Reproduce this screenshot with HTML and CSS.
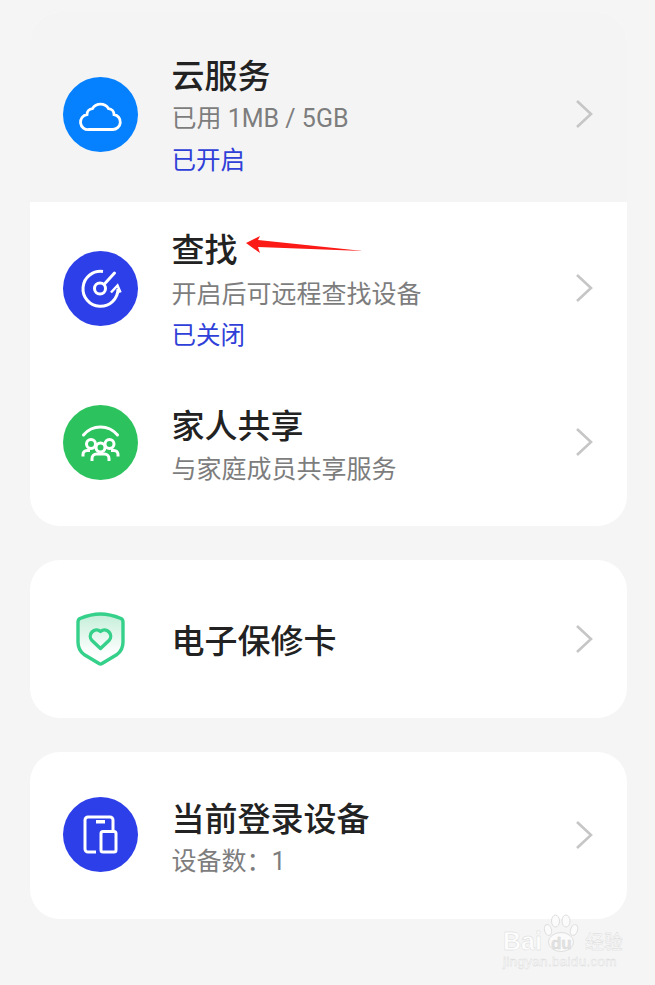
FILE: index.html
```html
<!DOCTYPE html>
<html lang="zh-CN">
<head>
<meta charset="utf-8">
<title>账号服务</title>
<link rel="stylesheet" href="styles.css">
</head>
<body>
<main class="page">
  <section class="card card-services">
    <div class="row row-pressed row-tall">
      <span class="icon icon-blue">
        <svg viewBox="0 0 75 75" width="75" height="75"><path d="M26 52.500H49.500a7.500 7.500 0 0 0 1.500-14.900a6 6 0 0 0-5.500-6a9.500 9.500 0 0 0-16 0a6 6 0 0 0-5.500 6a7.500 7.500 0 0 0 2 14.900z" fill="none" stroke="#fff" stroke-width="2.800"/></svg>
      </span>
      <div class="text">
        <div class="title">云服务</div>
        <div class="sub sub-latin">已用 1MB / 5GB</div>
        <div class="status">已开启</div>
      </div>
      <svg class="chev" viewBox="0 0 18 30" width="18" height="30"><path d="M2 2l14 13L2 28" fill="none" stroke="#c6c6c6" stroke-width="2.600"/></svg>
    </div>
    <div class="row row-tall">
      <span class="icon icon-indigo">
        <svg viewBox="0 0 75 75" width="75" height="75"><g fill="none" stroke="#fff" stroke-width="3"><path d="M40 20.500A17.500 17.500 0 1 0 55 38"/><circle cx="37" cy="37.500" r="5.500"/><path d="M41 33.500L51.500 22" stroke-linecap="round"/><path d="M48 41.500l6.500-7l3 7" stroke-width="2.500"/></g></svg>
      </span>
      <div class="text text-find">
        <div class="title">查找</div>
        <div class="sub">开启后可远程查找设备</div>
        <div class="status">已关闭</div>
      </div>
      <svg class="chev" viewBox="0 0 18 30" width="18" height="30"><path d="M2 2l14 13L2 28" fill="none" stroke="#c6c6c6" stroke-width="2.600"/></svg>
    </div>
    <div class="row row-mid">
      <span class="icon icon-green">
        <svg viewBox="0 0 75 75" width="75" height="75"><g fill="none" stroke="#fff" stroke-width="3"><path d="M20.500 30a22 22 0 0 1 34 0" stroke-linecap="round"/><circle cx="28" cy="39" r="4.500"/><circle cx="46.500" cy="39" r="4.500"/><circle cx="37.500" cy="42.500" r="4.500"/><path d="M20 51.500v-2a4 4 0 0 1 4-4h3M55 51.500v-2a4 4 0 0 0-4-4h-3"/><path d="M29 56v-2.500a4.500 4.500 0 0 1 4.500-4.500h8a4.500 4.500 0 0 1 4.500 4.500V56"/></g></svg>
      </span>
      <div class="text">
        <div class="title">家人共享</div>
        <div class="sub">与家庭成员共享服务</div>
      </div>
      <svg class="chev" viewBox="0 0 18 30" width="18" height="30"><path d="M2 2l14 13L2 28" fill="none" stroke="#c6c6c6" stroke-width="2.600"/></svg>
    </div>
  </section>

  <section class="card card-warranty">
    <div class="row row-fill row-warranty">
      <span class="icon">
        <svg viewBox="0 0 75 75" width="75" height="75">
          <defs><linearGradient id="shield" x1="0" y1="0" x2="0" y2="1"><stop offset="0" stop-color="#c4eed9"/><stop offset="0.800" stop-color="#ffffff"/></linearGradient></defs>
          <path d="M17 16.500Q28 12 37.500 12T58 16.500Q60 17.500 60 20V40Q60 48 54 52.500L39 61.500Q37.500 62.500 36 61.500L21 52.500Q15 48 15 40V20Q15 17.500 17 16.500z" fill="url(#shield)" stroke="#35d08a" stroke-width="3.400"/>
          <path d="M37.500 46.500l-8.500-8a6.200 6.200 0 0 1 8.500-9a6.200 6.200 0 0 1 8.500 9z" fill="none" stroke="#35d08a" stroke-width="3.400" stroke-linejoin="round"/>
        </svg>
      </span>
      <div class="text">
        <div class="title">电子保修卡</div>
      </div>
      <svg class="chev" viewBox="0 0 18 30" width="18" height="30"><path d="M2 2l14 13L2 28" fill="none" stroke="#c6c6c6" stroke-width="2.600"/></svg>
    </div>
  </section>

  <section class="card card-devices">
    <div class="row row-fill row-device">
      <span class="icon icon-indigo">
        <svg viewBox="0 0 75 75" width="75" height="75"><g fill="none" stroke="#fff" stroke-width="3"><path d="M33 55H25a3 3 0 0 1-3-3V23a3 3 0 0 1 3-3H47a3 3 0 0 1 3 3V33"/><rect x="38" y="34.500" width="15" height="20.500" rx="2"/></g><rect x="33" y="23" width="9" height="3.500" fill="#fff"/></svg>
      </span>
      <div class="text">
        <div class="title">当前登录设备</div>
        <div class="sub sub-latin">设备数：1</div>
      </div>
      <svg class="chev" viewBox="0 0 18 30" width="18" height="30"><path d="M2 2l14 13L2 28" fill="none" stroke="#c6c6c6" stroke-width="2.600"/></svg>
    </div>
  </section>
</main>

<svg class="arrow" viewBox="0 0 120 20" width="120" height="20"><path d="M1 9L15 2L13 6L118 17L13 13L15 19z" fill="#fb1a16"/></svg>

<div class="mark">
  <svg class="mark-paw" viewBox="0 0 36 38" width="36" height="38"><g fill="#fbfbfb" stroke="#dedede" stroke-width="1"><ellipse cx="5" cy="16" rx="3.500" ry="5.500" transform="rotate(-15 5 16)"/><ellipse cx="12.500" cy="7" rx="4" ry="6"/><ellipse cx="23" cy="7" rx="4" ry="6"/><ellipse cx="31" cy="16" rx="3.500" ry="5.500" transform="rotate(20 31 16)"/><ellipse cx="18" cy="28" rx="12.500" ry="9.500"/></g></svg>
  <div class="mark-brand"><span class="mark-bai">Bai</span><span class="mark-du">du</span><span class="mark-cn">经验</span></div>
  <div class="mark-url">jingyan.baidu.com</div>
</div>
</body>
</html>
```

FILE: styles.css
```css
html, body { margin: 0; padding: 0; }
body {
  width: 655px;
  height: 985px;
  overflow: hidden;
  background: #f5f5f5;
  font-family: "Noto Sans CJK SC", sans-serif;
  position: relative;
}
.page {
  display: flex;
  flex-direction: column;
  gap: 34px;
  padding: 12px 28px 0 30px;
}
.card {
  background: #fff;
  border-radius: 30px;
  overflow: hidden;
}
.card-services { padding-bottom: 18px; }
.card-warranty { height: 158px; display: flex; }
.card-devices { height: 167px; display: flex; }
.row {
  display: flex;
  align-items: center;
  padding: 0 33px;
  box-sizing: border-box;
}
.row-pressed { background: #f4f4f4; padding-top: 16px; }
.row-tall { height: 174px; }
.row-pressed.row-tall { height: 190px; }
.row-mid { height: 132px; }
.row-fill { flex: 1; }
.icon {
  width: 75px;
  height: 75px;
  border-radius: 50%;
  flex: none;
  display: block;
  margin-bottom: 2px;
}
.row-mid .icon, .row-warranty .icon { margin-bottom: 0; }
.icon svg { display: block; }
.icon-blue { background: #0580ff; }
.icon-indigo { background: #2d3fe8; }
.icon-green { background: #2cc35f; }
.text {
  flex: 1;
  margin-left: 33.500px;
  min-width: 0;
}
.text-find { margin-top: 1px; }
.text-find .sub { margin-top: 1px; }
.row-mid .text { margin-top: 5px; }
.row-device .text { margin-top: 4px; }
.title {
  font-size: 33px;
  font-weight: 500;
  line-height: 44px;
  color: #222;
}
.sub {
  font-size: 25px;
  line-height: 42px;
  color: #7d7d7d;
}
.sub-latin {
  font-family: Roboto, "Noto Sans CJK SC", sans-serif;
  padding-top: 4px;
  line-height: 38px;
}
.status {
  font-size: 24.500px;
  line-height: 41px;
  color: #2f40d8;
}
.chev { flex: none; margin: 0 1px 2px 0; }
.row-mid .chev, .row-warranty .chev { margin-bottom: 0; }
.arrow {
  position: absolute;
  left: 245px;
  top: 234px;
}
.mark {
  position: absolute;
  left: 503px;
  top: 913px;
  width: 120px;
  height: 60px;
  color: #fdfdfd;
  -webkit-text-stroke: 0.400px #d8d8d8;
}
.mark-paw { position: absolute; left: 40px; top: 1px; }
.mark-brand {
  position: absolute;
  top: 13px;
  left: 0;
  display: flex;
  font-family: "Liberation Sans", sans-serif;
  font-weight: 700;
  font-size: 25px;
  line-height: 30px;
  white-space: nowrap;
}
.mark-du { margin-left: 9px; width: 30px; padding-top: 3px; font-size: 17px; color: #e2e2e2; }
.mark-cn { margin-left: 4px; font-family: "Noto Sans CJK SC", sans-serif; font-weight: 400; font-size: 19px; }
.mark-url {
  position: absolute;
  top: 41px;
  left: 0;
  font-family: "Liberation Sans", sans-serif;
  font-size: 13.500px;
  line-height: 16px;
  letter-spacing: 0.300px;
  white-space: nowrap;
}
```
